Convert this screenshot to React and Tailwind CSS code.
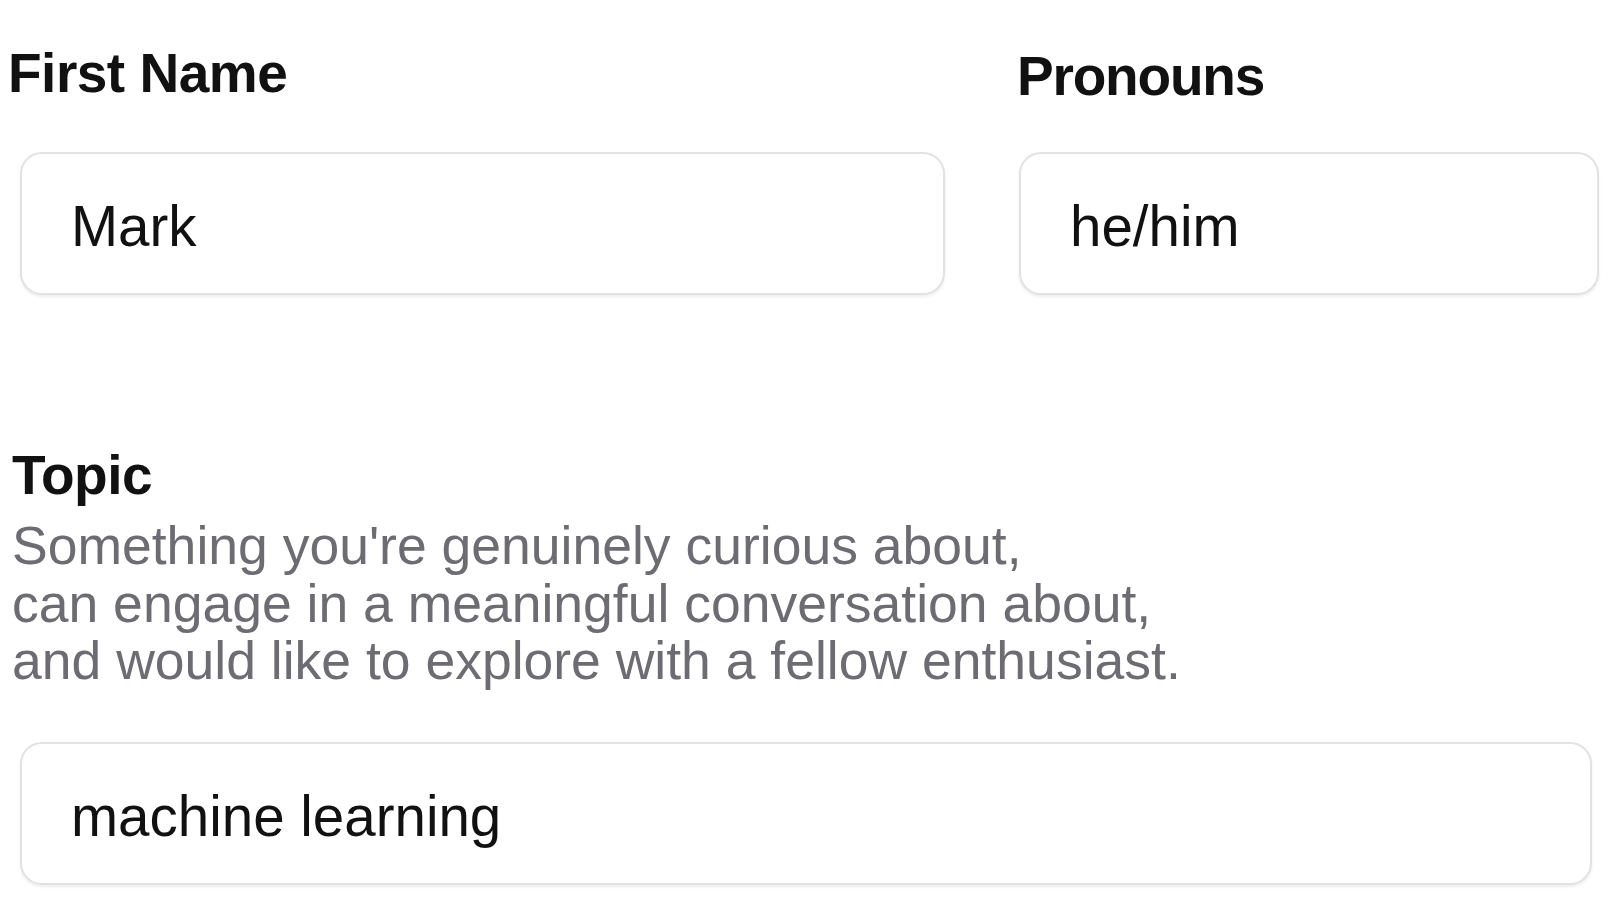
import React from "react";

const labelCls =
  "text-[55px] leading-[60px] font-bold tracking-[-0.5px] text-[#111111]";

const Field = ({ value, className }) => (
  <div
    className={
      "h-[143px] rounded-[22px] border-2 border-[#e2e2e5] bg-white pl-[49px] pt-[41px] shadow-[0_2px_3px_rgba(0,0,0,0.07)] " +
      className
    }
  >
    <div className="text-[56.5px] leading-[64px] text-[#111111]">{value}</div>
  </div>
);

const App = () => {
  return (
    <div
      className="h-[901px] w-[1610px] overflow-hidden bg-white"
      style={{ fontFamily: '"Liberation Sans", Arial, sans-serif' }}
    >
      <div className="flex pt-[43px]">
        <div className="flex w-[1003px] flex-col">
          <div className={labelCls + " pl-[8px]"}>First Name</div>
          <Field value="Mark" className="ml-[20px] mr-[58px] mt-[49px]" />
        </div>
        <div className="flex flex-1 flex-col pr-[11px]">
          <div className="mt-[3px] pl-[14px] text-[55px] font-bold leading-[60px] tracking-[-1.2px] text-[#111111]">
            Pronouns
          </div>
          <Field value="he/him" className="ml-[16px] mt-[46px]" />
        </div>
      </div>

      <div className="mt-[150px] flex flex-col pl-[12px]">
        <div className={labelCls}>Topic</div>
        <div className="mt-[12px] text-[53.5px] leading-[57.5px] text-[#6c6c72]">
          <div>Something you're genuinely curious about,</div>
          <div>can engage in a meaningful conversation about,</div>
          <div>and would like to explore with a fellow enthusiast.</div>
        </div>
        <Field value="machine learning" className="ml-[8px] mr-[18px] mt-[52px]" />
      </div>
    </div>
  );
};

export default App;
